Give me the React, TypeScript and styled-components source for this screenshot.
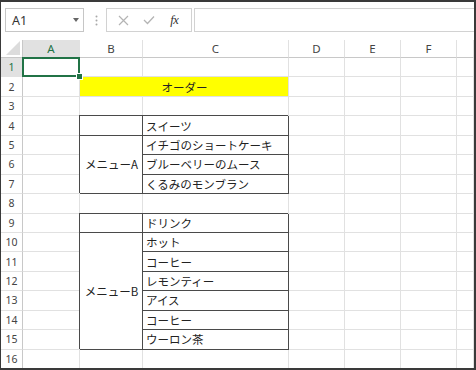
import React from "react";
import styled, { createGlobalStyle, css } from "styled-components";

const GlobalStyle = createGlobalStyle`
  html, body {
    margin: 0;
    padding: 0;
    background: #fff;
  }
  body {
    font-family: "Noto Sans", "Noto Sans CJK JP", sans-serif;
  }
`;

const GREEN = "#217346";
const GRID = "#e1e1e1";
const HEAD_LINE = "#c8c8c8";
const BOX = "#4a4a4a";

const Frame = styled.div`
  box-sizing: border-box;
  width: 476px;
  height: 370px;
  border: 2px solid #3a3a3a;
  border-left-width: 1px;
  overflow: hidden;
  background: #fff;
  display: flex;
  flex-direction: column;
`;

const Toolbar = styled.div`
  box-sizing: border-box;
  height: 38px;
  flex: none;
  display: flex;
  align-items: flex-start;
  padding: 6px 0 0 4px;
  background: #fff;
`;

const NameBox = styled.div`
  box-sizing: border-box;
  width: 79px;
  height: 24px;
  border: 1px solid #c6c6c6;
  display: flex;
  align-items: center;
  padding: 0 4px 0 6px;
  font-size: 12.5px;
  color: #333;
`;

const DropArrow = styled.span`
  margin-left: auto;
  width: 0;
  height: 0;
  border-left: 3.5px solid transparent;
  border-right: 3.5px solid transparent;
  border-top: 4px solid #666;
`;

const Grip = styled.svg`
  margin: 7px 0 0 11px;
  flex: none;
`;

const ButtonGroup = styled.div`
  box-sizing: border-box;
  margin-left: 8px;
  width: 86px;
  height: 24px;
  border: 1px solid #d2d2d2;
  display: flex;
  align-items: center;
  justify-content: space-around;
  padding: 0 4px;
`;

const IconButton = styled.span`
  width: 20px;
  height: 20px;
  display: flex;
  align-items: center;
  justify-content: center;
  color: #b4b4b4;
`;

const Fx = styled.span`
  font-family: "Liberation Serif", serif;
  font-style: italic;
  font-size: 12.5px;
  color: #333;
  letter-spacing: -0.5px;
`;

const FormulaInput = styled.div`
  box-sizing: border-box;
  margin-left: 2px;
  flex: 1;
  height: 24px;
  border: 1px solid #d2d2d2;
  border-right: none;
  background: #fff;
`;

const Sheet = styled.div`
  display: grid;
  grid-template-columns: 22px 57px 63px 146px 56px 56px 56px 1fr;
  grid-template-rows: 18px repeat(16, 19.45px);
  flex: none;
`;

const Corner = styled.div`
  box-sizing: border-box;
  grid-row: 1;
  grid-column: 1;
  border-right: 1px solid ${HEAD_LINE};
  border-bottom: 1px solid ${HEAD_LINE};
  display: flex;
  align-items: flex-end;
  justify-content: flex-end;
  padding: 0 2px 2px 0;
`;

const ColHead = styled.div<{ $col: number; $active?: boolean }>`
  box-sizing: border-box;
  grid-row: 1;
  grid-column: ${({ $col }) => $col + 2};
  border-right: 1px solid ${GRID};
  border-bottom: 1px solid ${HEAD_LINE};
  display: flex;
  align-items: center;
  justify-content: center;
  font-size: 11.5px;
  color: ${({ $active }) => ($active ? GREEN : "#444")};
  background: ${({ $active }) => ($active ? "#e1e1e1" : "#fff")};
`;

const RowHead = styled.div<{ $row: number; $active?: boolean }>`
  box-sizing: border-box;
  grid-row: ${({ $row }) => $row + 1};
  grid-column: 1;
  border-right: 1px solid ${HEAD_LINE};
  border-bottom: 1px solid ${GRID};
  display: flex;
  align-items: center;
  justify-content: center;
  font-size: 10.5px;
  color: ${({ $active }) => ($active ? GREEN : "#444")};
  background: ${({ $active }) => ($active ? "#e1e1e1" : "#fff")};
`;

const Cell = styled.div<{ $row: number; $col: number }>`
  box-sizing: border-box;
  grid-row: ${({ $row }) => $row + 1};
  grid-column: ${({ $col }) => $col + 2};
  border-right: 1px solid ${GRID};
  border-bottom: 1px solid ${GRID};
  min-width: 0;
`;

const DataCell = styled.div<{
  $row: number;
  $col: number;
  $rowSpan?: number;
  $colSpan?: number;
  $center?: boolean;
  $fill?: string;
  $boxed?: boolean;
}>`
  box-sizing: border-box;
  grid-row: ${({ $row, $rowSpan = 1 }) => `${$row + 1} / span ${$rowSpan}`};
  grid-column: ${({ $col, $colSpan = 1 }) => `${$col + 2} / span ${$colSpan}`};
  display: flex;
  align-items: center;
  justify-content: ${({ $center }) => ($center ? "center" : "flex-start")};
  padding: 0 2px 0 3px;
  font-family: "Noto Sans CJK JP", "Noto Sans", sans-serif;
  font-size: 11.5px;
  color: #222;
  white-space: nowrap;
  background: ${({ $fill }) => $fill || "#fff"};
  border-right: 1px solid ${GRID};
  border-bottom: 1px solid ${GRID};
  ${({ $boxed }) =>
    $boxed &&
    css`
      border-right-color: ${BOX};
      border-bottom-color: ${BOX};
      box-shadow: -1px -1px 0 0 ${BOX};
    `}
`;

const Selection = styled.div`
  box-sizing: border-box;
  grid-row: 2;
  grid-column: 2;
  margin: -1px 0 0 -1px;
  border: 2px solid ${GREEN};
  position: relative;
  z-index: 2;

  &::after {
    content: "";
    position: absolute;
    right: -4px;
    bottom: -4px;
    width: 5px;
    height: 5px;
    background: ${GREEN};
    box-shadow: 0 0 0 1px #fff;
  }
`;

const COLUMNS = ["A", "B", "C", "D", "E", "F", "G"];
const ROWS = 16;

type Entry = {
  row: number;
  col: number;
  text?: string;
  rowSpan?: number;
  colSpan?: number;
  center?: boolean;
  fill?: string;
  boxed?: boolean;
};

// col index: A=0, B=1, C=2 ...
const entries: Entry[] = [
  { row: 2, col: 1, colSpan: 2, text: "オーダー", center: true, fill: "#ffff00" },
  { row: 4, col: 1, boxed: true },
  { row: 4, col: 2, text: "スイーツ", boxed: true },
  { row: 5, col: 1, rowSpan: 3, text: "メニューA", center: true, boxed: true },
  { row: 5, col: 2, text: "イチゴのショートケーキ", boxed: true },
  { row: 6, col: 2, text: "ブルーベリーのムース", boxed: true },
  { row: 7, col: 2, text: "くるみのモンブラン", boxed: true },
  { row: 9, col: 1, boxed: true },
  { row: 9, col: 2, text: "ドリンク", boxed: true },
  { row: 10, col: 1, rowSpan: 6, text: "メニューB", center: true, boxed: true },
  { row: 10, col: 2, text: "ホット", boxed: true },
  { row: 11, col: 2, text: "コーヒー", boxed: true },
  { row: 12, col: 2, text: "レモンティー", boxed: true },
  { row: 13, col: 2, text: "アイス", boxed: true },
  { row: 14, col: 2, text: "コーヒー", boxed: true },
  { row: 15, col: 2, text: "ウーロン茶", boxed: true },
];

function FormulaBar() {
  return (
    <Toolbar>
      <NameBox>
        A1
        <DropArrow />
      </NameBox>
      <Grip width="3" height="11" viewBox="0 0 3 11">
        <circle cx="1.5" cy="1.5" r="1" fill="#a8a8a8" />
        <circle cx="1.5" cy="5.5" r="1" fill="#a8a8a8" />
        <circle cx="1.5" cy="9.5" r="1" fill="#a8a8a8" />
      </Grip>
      <ButtonGroup>
        <IconButton>
          <svg width="11" height="11" viewBox="0 0 11 11">
            <path d="M1 1 L10 10 M10 1 L1 10" stroke="currentColor" strokeWidth="1.2" />
          </svg>
        </IconButton>
        <IconButton>
          <svg width="12" height="10" viewBox="0 0 12 10">
            <path d="M1 5 L4.5 8.5 L11 1.5" stroke="currentColor" strokeWidth="1.3" fill="none" />
          </svg>
        </IconButton>
        <IconButton>
          <Fx>fx</Fx>
        </IconButton>
      </ButtonGroup>
      <FormulaInput />
    </Toolbar>
  );
}

export default function App() {
  return (
    <>
      <GlobalStyle />
      <Frame>
        <FormulaBar />
        <Sheet>
          <Corner>
            <svg width="14" height="14" viewBox="0 0 14 14">
              <path d="M14 0 L14 14 L0 14 Z" fill="#dcdcdc" />
            </svg>
          </Corner>
          {COLUMNS.map((c, i) => (
            <ColHead key={c} $col={i} $active={i === 0}>
              {c === "G" ? "" : c}
            </ColHead>
          ))}
          {Array.from({ length: ROWS }, (_, i) => {
            const row = i + 1;
            return (
              <React.Fragment key={row}>
                <RowHead $row={row} $active={row === 1}>
                  {row}
                </RowHead>
                {COLUMNS.map((c, col) => (
                  <Cell key={c} $row={row} $col={col} />
                ))}
              </React.Fragment>
            );
          })}
          {entries.map((e, i) => (
            <DataCell
              key={i}
              $row={e.row}
              $col={e.col}
              $rowSpan={e.rowSpan}
              $colSpan={e.colSpan}
              $center={e.center}
              $fill={e.fill}
              $boxed={e.boxed}
            >
              {e.text}
            </DataCell>
          ))}
          <Selection />
        </Sheet>
      </Frame>
    </>
  );
}
